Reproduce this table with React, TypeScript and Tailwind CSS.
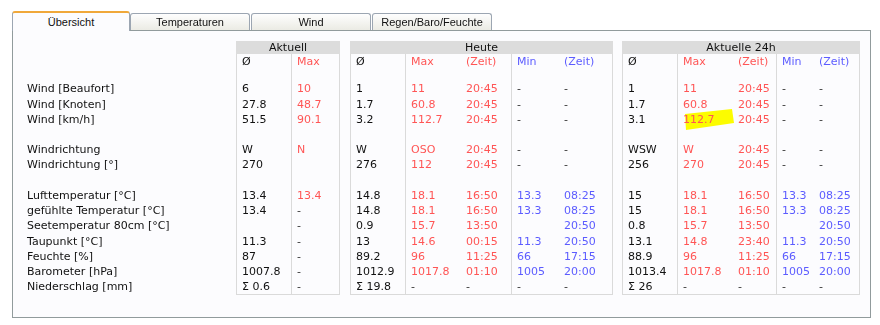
import React from 'react'

type Tone = 'k' | 'r' | 'b'

type Col = {
  head: string
  tone: Tone
  w: string
  vals: string[]
  divider?: boolean
  mark?: number
}

const labels = [
  'Wind [Beaufort]',
  'Wind [Knoten]',
  'Wind [km/h]',
  '',
  'Windrichtung',
  'Windrichtung [°]',
  '',
  'Lufttemperatur [°C]',
  'gefühlte Temperatur [°C]',
  'Seetemperatur 80cm [°C]',
  'Taupunkt [°C]',
  'Feuchte [%]',
  'Barometer [hPa]',
  'Niederschlag [mm]',
]

const toneClass: Record<Tone, string> = {
  k: 'text-[#111]',
  r: 'text-[#ff5555]',
  b: 'text-[#5c5cff]',
}

const groups: { title: string; w: string; cols: Col[] }[] = [
  {
    title: 'Aktuell',
    w: 'w-[104px]',
    cols: [
      { head: 'Ø', tone: 'k', w: 'w-[55px]', divider: true, vals: ['6', '27.8', '51.5', '', 'W', '270', '', '13.4', '13.4', '', '11.3', '87', '1007.8', 'Σ 0.6'] },
      { head: 'Max', tone: 'r', w: 'w-[46px]', vals: ['10', '48.7', '90.1', '', 'N', '', '', '13.4', '-', '-', '-', '-', '-', '-'] },
    ],
  },
  {
    title: 'Heute',
    w: 'w-[263px]',
    cols: [
      { head: 'Ø', tone: 'k', w: 'w-[55px]', divider: true, vals: ['1', '1.7', '3.2', '', 'W', '276', '', '14.8', '14.8', '0.9', '13', '89.2', '1012.9', 'Σ 19.8'] },
      { head: 'Max', tone: 'r', w: 'w-[55px]', vals: ['11', '60.8', '112.7', '', 'OSO', '112', '', '18.1', '18.1', '15.7', '14.6', '96', '1017.8', '-'] },
      { head: '(Zeit)', tone: 'r', w: 'w-[51px]', divider: true, vals: ['20:45', '20:45', '20:45', '', '20:45', '20:45', '', '16:50', '16:50', '13:50', '00:15', '11:25', '01:10', '-'] },
      { head: 'Min', tone: 'b', w: 'w-[47px]', vals: ['-', '-', '-', '', '-', '-', '', '13.3', '13.3', '', '11.3', '66', '1005', '-'] },
      { head: '(Zeit)', tone: 'b', w: 'w-[51px]', vals: ['-', '-', '-', '', '-', '-', '', '08:25', '08:25', '20:50', '20:50', '17:15', '20:00', '-'] },
    ],
  },
  {
    title: 'Aktuelle 24h',
    w: 'w-[238px]',
    cols: [
      { head: 'Ø', tone: 'k', w: 'w-[55px]', divider: true, vals: ['1', '1.7', '3.1', '', 'WSW', '256', '', '15', '15', '0.8', '13.1', '88.9', '1013.4', 'Σ 26'] },
      { head: 'Max', tone: 'r', w: 'w-[55px]', mark: 2, vals: ['11', '60.8', '112.7', '', 'W', '270', '', '18.1', '18.1', '15.7', '14.8', '96', '1017.8', '-'] },
      { head: '(Zeit)', tone: 'r', w: 'w-[44px]', divider: true, vals: ['20:45', '20:45', '20:45', '', '20:45', '20:45', '', '16:50', '16:50', '13:50', '23:40', '11:25', '01:10', '-'] },
      { head: 'Min', tone: 'b', w: 'w-[37px]', vals: ['-', '-', '-', '', '-', '-', '', '13.3', '13.3', '', '11.3', '66', '1005', '-'] },
      { head: '(Zeit)', tone: 'b', w: 'w-[43px]', vals: ['-', '-', '-', '', '-', '-', '', '08:25', '08:25', '20:50', '20:50', '17:15', '20:00', '-'] },
    ],
  },
]

// yellow marker stroke drawn over one cell
const Marker = () => (
  <svg className="absolute left-[1px] top-[-4px] mix-blend-multiply pointer-events-none" width="52" height="23" viewBox="0 0 52 23">
    <polygon points="1,6 48,1 50,15 2,22" fill="#ffff00" />
  </svg>
)

const Column = ({ c }: { c: Col }) => (
  <div className={`${c.w} flex flex-col pl-[5px] whitespace-nowrap ${c.divider ? 'border-r border-[#dadada]' : ''}`}>
    <div className={`h-[15px] leading-[15px] ${toneClass[c.tone]}`}>{c.head}</div>
    <div className="h-[12.4px]" />
    {c.vals.map((v, i) => (
      <div
        key={i}
        className={`relative h-[15.23px] leading-[15.23px] ${v === '-' ? 'text-[#333]' : toneClass[c.tone]}`}
      >
        {c.mark === i && <Marker />}
        <span className="relative">{v}</span>
      </div>
    ))}
  </div>
)

const Tab = ({ label }: { label: string }) => (
  <div className="w-[120px] h-[17px] mr-px flex items-center justify-center border border-b-0 border-[#9ca6b2] rounded-t-[3px] bg-gradient-to-b from-[#fefefe] to-[#ebebe4] text-[11px] text-[#111] pt-px">
    {label}
  </div>
)

export default function App() {
  return (
    <div className="w-[880px] h-[325px] bg-white font-['DejaVu_Sans',sans-serif] text-[11px]">
      <div className="h-[30px] flex items-end pl-[12px] font-['Liberation_Sans',Arial,sans-serif]">
        <div className="relative z-10 -mb-px w-[118px] h-[20px] flex items-start justify-center pt-[1px] border-x border-[#9ca6b2] border-t-2 border-t-[#f0a83a] rounded-t-[3px] bg-[#fcfcfe] text-[11px] text-[#111]">
          Übersicht
        </div>
        <Tab label="Temperaturen" />
        <Tab label="Wind" />
        <Tab label="Regen/Baro/Feuchte" />
      </div>

      <div className="ml-[12px] w-[859px] h-[288px] border border-[#919b9c] bg-[#fcfcfe] pl-[14px] pt-[10px] flex">
        <div className="w-[209px] flex flex-col text-[#111] whitespace-nowrap">
          <div className="h-[13px]" />
          <div className="h-[15px]" />
          <div className="h-[12.4px]" />
          {labels.map((l, i) => (
            <div key={i} className="h-[15.23px] leading-[15.23px]">{l}</div>
          ))}
        </div>

        <div className="flex gap-[10px]">
          {groups.map((g, gi) => (
            <div key={g.title} className={`${g.w} flex flex-col ${gi === 2 ? '-ml-px' : ''}`}>
              <div className="h-[13px] leading-[13px] bg-[#dcdcdc] text-center text-[#111]">{g.title}</div>
              <div className="flex border-x border-b border-[#dadada]">
                {g.cols.map((c, ci) => (
                  <Column key={ci} c={c} />
                ))}
              </div>
            </div>
          ))}
        </div>
      </div>
    </div>
  )
}
